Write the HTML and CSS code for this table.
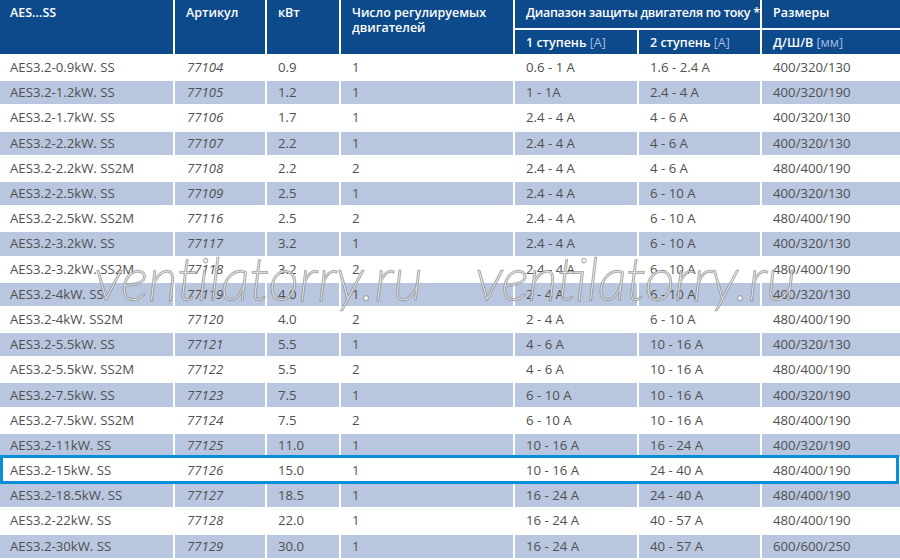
FILE: index.html
```html
<!DOCTYPE html>
<html lang="ru">
<head>
<meta charset="utf-8">
<title>AES...SS</title>
<link rel="stylesheet" href="styles.css">
</head>
<body>
<div class="page">
<table class="spec">
  <colgroup>
    <col class="c1"><col class="c2"><col class="c3"><col class="c4"><col class="c5"><col class="c6"><col class="c7">
  </colgroup>
  <thead>
    <tr class="h1">
      <th rowspan="2" class="first">AES...SS</th>
      <th rowspan="2">Артикул</th>
      <th rowspan="2">кВт</th>
      <th rowspan="2">Число регулируемых<br>двигателей</th>
      <th colspan="2" class="range">Диапазон защиты двигателя по току *</th>
      <th>Размеры</th>
    </tr>
    <tr class="h2">
      <th>1 ступень <span class="unit">[A]</span></th>
      <th>2 ступень <span class="unit">[A]</span></th>
      <th>Д/Ш/В <span class="unit">[мм]</span></th>
    </tr>
  </thead>
  <tbody>
    <tr><td class="first">AES3.2-0.9kW. SS</td><td class="art">77104</td><td>0.9</td><td>1</td><td>0.6 - 1 A</td><td>1.6 - 2.4 A</td><td>400/320/130</td></tr>
    <tr class="alt"><td class="first">AES3.2-1.2kW. SS</td><td class="art">77105</td><td>1.2</td><td>1</td><td>1 - 1A</td><td>2.4 - 4 A</td><td>400/320/190</td></tr>
    <tr><td class="first">AES3.2-1.7kW. SS</td><td class="art">77106</td><td>1.7</td><td>1</td><td>2.4 - 4 A</td><td>4 - 6 A</td><td>400/320/130</td></tr>
    <tr class="alt"><td class="first">AES3.2-2.2kW. SS</td><td class="art">77107</td><td>2.2</td><td>1</td><td>2.4 - 4 A</td><td>4 - 6 A</td><td>400/320/130</td></tr>
    <tr><td class="first">AES3.2-2.2kW. SS2M</td><td class="art">77108</td><td>2.2</td><td>2</td><td>2.4 - 4 A</td><td>4 - 6 A</td><td>480/400/190</td></tr>
    <tr class="alt"><td class="first">AES3.2-2.5kW. SS</td><td class="art">77109</td><td>2.5</td><td>1</td><td>2.4 - 4 A</td><td>6 - 10 A</td><td>400/320/130</td></tr>
    <tr><td class="first">AES3.2-2.5kW. SS2M</td><td class="art">77116</td><td>2.5</td><td>2</td><td>2.4 - 4 A</td><td>6 - 10 A</td><td>480/400/190</td></tr>
    <tr class="alt"><td class="first">AES3.2-3.2kW. SS</td><td class="art">77117</td><td>3.2</td><td>1</td><td>2.4 - 4 A</td><td>6 - 10 A</td><td>400/320/130</td></tr>
    <tr><td class="first">AES3.2-3.2kW. SS2M</td><td class="art">77118</td><td>3.2</td><td>2</td><td>2.4 - 4 A</td><td>6 - 10 A</td><td>480/400/190</td></tr>
    <tr class="alt"><td class="first">AES3.2-4kW. SS</td><td class="art">77119</td><td>4.0</td><td>1</td><td>2 - 4 A</td><td>6 - 10 A</td><td>400/320/130</td></tr>
    <tr><td class="first">AES3.2-4kW. SS2M</td><td class="art">77120</td><td>4.0</td><td>2</td><td>2 - 4 A</td><td>6 - 10 A</td><td>480/400/190</td></tr>
    <tr class="alt"><td class="first">AES3.2-5.5kW. SS</td><td class="art">77121</td><td>5.5</td><td>1</td><td>4 - 6 A</td><td>10 - 16 A</td><td>400/320/130</td></tr>
    <tr><td class="first">AES3.2-5.5kW. SS2M</td><td class="art">77122</td><td>5.5</td><td>2</td><td>4 - 6 A</td><td>10 - 16 A</td><td>480/400/190</td></tr>
    <tr class="alt"><td class="first">AES3.2-7.5kW. SS</td><td class="art">77123</td><td>7.5</td><td>1</td><td>6 - 10 A</td><td>10 - 16 A</td><td>400/320/190</td></tr>
    <tr><td class="first">AES3.2-7.5kW. SS2M</td><td class="art">77124</td><td>7.5</td><td>2</td><td>6 - 10 A</td><td>10 - 16 A</td><td>480/400/190</td></tr>
    <tr class="alt"><td class="first">AES3.2-11kW. SS</td><td class="art">77125</td><td>11.0</td><td>1</td><td>10 - 16 A</td><td>16 - 24 A</td><td>400/320/190</td></tr>
    <tr class="hl"><td class="first">AES3.2-15kW. SS</td><td class="art">77126</td><td>15.0</td><td>1</td><td>10 - 16 A</td><td>24 - 40 A</td><td>480/400/190</td></tr>
    <tr class="alt"><td class="first">AES3.2-18.5kW. SS</td><td class="art">77127</td><td>18.5</td><td>1</td><td>16 - 24 A</td><td>24 - 40 A</td><td>480/400/190</td></tr>
    <tr><td class="first">AES3.2-22kW. SS</td><td class="art">77128</td><td>22.0</td><td>1</td><td>16 - 24 A</td><td>40 - 57 A</td><td>480/400/190</td></tr>
    <tr class="alt"><td class="first">AES3.2-30kW. SS</td><td class="art">77129</td><td>30.0</td><td>1</td><td>16 - 24 A</td><td>40 - 57 A</td><td>600/600/250</td></tr>
  </tbody>
</table>
<div class="hl-frame" aria-hidden="true"></div>
<span class="wm wm-left">ventilatorry.ru</span>
<span class="wm wm-right">ventilatorry.ru</span>
</div>
</body>
</html>
```

FILE: styles.css
```css
html, body {
  margin: 0;
  padding: 0;
  background: #ffffff;
}
.page {
  position: relative;
  width: 900px;
  height: 560px;
  overflow: hidden;
  font-family: "Open Sans", "Noto Sans", "Liberation Sans", sans-serif;
}
.spec {
  border-collapse: separate;
  border-spacing: 2px 2px;
  margin: -2px 0 0 -2px;
  width: 904px;
  table-layout: fixed;
}
.c1 { width: 173px; }
.c2 { width: 90px; }
.c3 { width: 72px; }
.c4 { width: 172px; }
.c5 { width: 122px; }
.c6 { width: 121px; }
.c7 { width: 138px; }

.spec th {
  background: #0d4a8b;
  color: #ffffff;
  font-weight: 600;
  font-size: 12.5px;
  line-height: 15px;
  text-align: left;
  padding: 0 4px 0 11px;
  white-space: nowrap;
}
.spec th.first { padding-left: 10px; }
.spec th.range { letter-spacing: -0.3px; }
.h1 th {
  height: 28px;
  vertical-align: top;
  padding-top: 5px;
  box-sizing: border-box;
}
.h2 th {
  height: 24px;
  vertical-align: middle;
  box-sizing: border-box;
}
.unit {
  font-weight: 400;
  color: #a9bde0;
}
.spec td {
  height: 23.2px;
  box-sizing: border-box;
  padding: 0 4px 0 11px;
  font-size: 13.2px;
  line-height: 15px;
  color: #505050;
  vertical-align: middle;
  white-space: nowrap;
  background: #ffffff;
}
.spec td.first { padding-left: 10px; }
.spec td.art { font-style: italic; padding-left: 12px; }
.spec tr.alt td { background: #b9c6df; }

.hl-frame {
  position: absolute;
  left: 0;
  top: 455px;
  width: 899px;
  height: 29px;
  box-sizing: border-box;
  border: 3px solid #0b8ed9;
  pointer-events: none;
}
.wm {
  position: absolute;
  top: 249px;
  font-family: "Lato", "Liberation Sans", sans-serif;
  font-style: italic;
  font-weight: 100;
  font-size: 58px;
  line-height: 58px;
  color: rgba(255, 255, 255, 0.9);
  -webkit-text-stroke: 2.4px rgba(150, 150, 150, 0.75);
  paint-order: stroke fill;
  pointer-events: none;
  white-space: nowrap;
}
.wm-left { left: 95px; letter-spacing: 0.5px; }
.wm-right { left: 476px; }
```
